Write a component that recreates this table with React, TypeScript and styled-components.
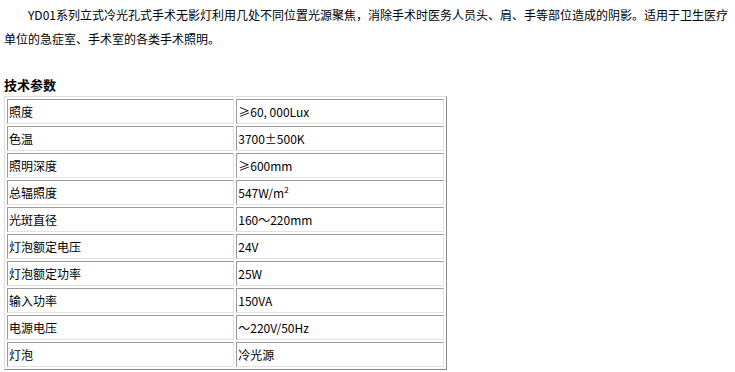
import React from "react";
import styled, { createGlobalStyle } from "styled-components";

const GlobalStyle = createGlobalStyle`
  html, body { margin: 0; padding: 0; background: #ffffff; }
  body {
    font-family: "Noto Sans CJK SC", "Liberation Sans", sans-serif;
    color: #000000;
  }
`;

const Page = styled.div`
  padding: 3px 4px 0 4px;
  width: 727px;
`;

const Intro = styled.p`
  margin: 0;
  font-size: 12px;
  line-height: 24px;
  text-indent: 24px;
  color: #000;
`;

const Heading = styled.h3`
  margin: 24px 0 1px 0;
  font-size: 13px;
  line-height: 20px;
  font-weight: bold;
`;

const SpecTable = styled.table`
  width: 443px;
  border-collapse: separate;
  border-spacing: 2px;
  border-style: solid;
  border-width: 1px;
  border-color: #dedede #8a8a8a #8a8a8a #dedede;
`;

const Cell = styled.td<{ $w: number }>`
  width: ${(p) => p.$w}px;
  height: 23px;
  padding: 0 1px;
  font-size: 12px;
  line-height: 23px;
  vertical-align: middle;
  border-style: solid;
  border-width: 1px;
  border-color: #9a9a9a #e2e2e2 #e2e2e2 #9a9a9a;
  white-space: nowrap;
`;

const Sup = styled.sup`
  font-size: 8px;
  line-height: 0;
`;

const rows: [string, React.ReactNode][] = [
  ["照度", "≥60, 000Lux"],
  ["色温", "3700±500K"],
  ["照明深度", "≥600mm"],
  ["总辐照度", <>547W/m<Sup>2</Sup></>],
  ["光斑直径", "160～220mm"],
  ["灯泡额定电压", "24V"],
  ["灯泡额定功率", "25W"],
  ["输入功率", "150VA"],
  ["电源电压", "～220V/50Hz"],
  ["灯泡", "冷光源"],
];

export default function App() {
  return (
    <>
      <GlobalStyle />
      <Page>
        <Intro>
          YD01系列立式冷光孔式手术无影灯利用几处不同位置光源聚焦，消除手术时医务人员头、肩、手等部位造成的阴影。适用于卫生医疗单位的急症室、手术室的各类手术照明。
        </Intro>
        <Heading>技术参数</Heading>
        <SpecTable>
          <tbody>
            {rows.map(([k, v]) => (
              <tr key={k}>
                <Cell $w={227}>{k}</Cell>
                <Cell $w={207}>{v}</Cell>
              </tr>
            ))}
          </tbody>
        </SpecTable>
      </Page>
    </>
  );
}
